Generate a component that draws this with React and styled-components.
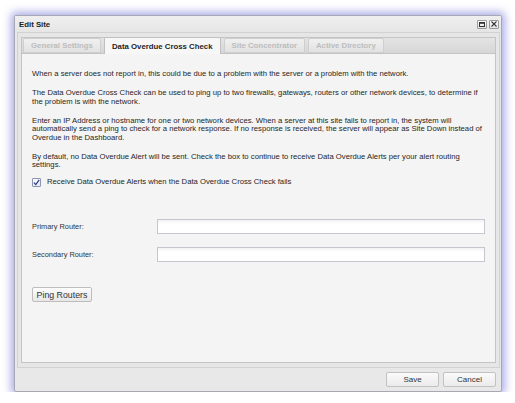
import React from "react";
import styled, { createGlobalStyle } from "styled-components";

const GlobalStyle = createGlobalStyle`
  html, body {
    margin: 0;
    padding: 0;
    background: #ffffff;
  }
  body {
    font-family: "Liberation Sans", Arial, sans-serif;
    color: #2b2b2b;
  }
`;

const Page = styled.div`
  padding: 15px 0 0 14px;
`;

const Dialog = styled.div`
  width: 486px;
  height: 375px;
  display: flex;
  flex-direction: column;
  background: #e8e8e8;
  border: 1px solid #a8a8b4;
  border-radius: 2px;
  box-shadow: 0 0 8px 3px rgba(104, 104, 212, 0.55);
`;

const TitleBar = styled.div`
  height: 16px;
  display: flex;
  align-items: center;
  justify-content: space-between;
  padding: 0 2px 0 4px;
  background: linear-gradient(#efefef, #e6e6e6);
`;

const Title = styled.span`
  font-size: 7.8px;
  font-weight: bold;
  color: #1e1e1e;
`;

const WinButtons = styled.div`
  display: flex;
  gap: 2px;
`;

const WinButton = styled.span`
  width: 8px;
  height: 7px;
  border: 1px solid #9a9a9a;
  border-radius: 1px;
  background: linear-gradient(#ffffff, #e2e2e2);
  display: flex;
  align-items: center;
  justify-content: center;
`;

const Body = styled.div`
  flex: 1;
  display: flex;
  flex-direction: column;
  padding: 0 1px 0 2px;
`;

const Frame = styled.div`
  flex: 1;
  display: flex;
  border: 1px solid #d2d2d2;
  padding: 4px 3px 4px 3px;
  background: #e6e6e6;
`;

const Panel = styled.div`
  flex: 1;
  display: flex;
  flex-direction: column;
  border: 1px solid #c4c4c4;
  background: #f4f4f4;
`;

const TabStrip = styled.div`
  height: 15px;
  display: flex;
  align-items: flex-end;
  gap: 3px;
  padding-left: 1px;
  background: linear-gradient(#e4e4e4, #d6d6d6);
  border-bottom: 1px solid #c4c4c4;
`;

const Tab = styled.div`
  height: ${(p) => (p.$active ? "16px" : "13px")};
  margin-bottom: ${(p) => (p.$active ? "-1px" : "0")};
  padding: 0 7px;
  display: flex;
  align-items: center;
  font-size: 7.8px;
  font-weight: bold;
  white-space: nowrap;
  color: ${(p) => (p.$active ? "#1f1f1f" : "#bdbdbd")};
  background: ${(p) =>
    p.$active ? "#f7f7f7" : "linear-gradient(#f0f0f0, #e2e2e2)"};
  border: 1px solid ${(p) => (p.$active ? "#c0c0c0" : "#cfcfcf")};
  border-bottom: ${(p) => (p.$active ? "none" : "1px solid #cfcfcf")};
  border-radius: 2px 2px 0 0;
`;

const Content = styled.div`
  padding: 16px 10px 0 10px;
  font-size: 7.7px;
  line-height: 8.5px;
  color: #262626;
`;

const Para = styled.p`
  margin: 0 0 10.5px 0;
  white-space: nowrap;
`;

const CheckRow = styled.label`
  display: flex;
  align-items: center;
  gap: 6px;
  height: 9px;
  margin-top: -2px;
`;

const Box = styled.span`
  width: 7px;
  height: 7px;
  border: 1px solid #8d95b5;
  border-radius: 1px;
  background: linear-gradient(#fbfbfd, #e6e8f0);
  display: flex;
  align-items: center;
  justify-content: center;
`;

const Form = styled.div`
  margin-top: 32px;
  display: flex;
  flex-direction: column;
  gap: 13px;
`;

const Row = styled.div`
  display: flex;
  align-items: center;
`;

const Label = styled.span`
  width: 125px;
  font-size: 7.4px;
  color: #333;
  padding-top: 2px;
`;

const Input = styled.div`
  width: 326px;
  height: 13px;
  border: 1px solid #c6c6d0;
  background: linear-gradient(#f2f2f2, #ffffff 4px, #ffffff);
`;

const PingButton = styled.button`
  margin-top: 25px;
  align-self: flex-start;
  width: 60px;
  height: 15px;
  padding: 0;
  font-family: "Liberation Sans", Arial, sans-serif;
  font-size: 8.8px;
  color: #333;
  border: 1px solid #bdbdbd;
  border-radius: 2px;
  background: linear-gradient(#fdfdfd, #e7e7e7);
`;

const Footer = styled.div`
  height: 23px;
  display: flex;
  align-items: center;
  justify-content: flex-end;
  gap: 4px;
  padding-right: 5px;
`;

const FooterButton = styled.button`
  width: 53px;
  height: 15px;
  padding: 0;
  font-family: "Liberation Sans", Arial, sans-serif;
  font-size: 8px;
  color: #333;
  border: 1px solid #c2c2c2;
  border-radius: 2px;
  background: linear-gradient(#fafafa, #ebebeb);
`;

const tabs = [
  { label: "General Settings" },
  { label: "Data Overdue Cross Check", active: true },
  { label: "Site Concentrator" },
  { label: "Active Directory" },
];

export default function App() {
  return (
    <>
      <GlobalStyle />
      <Page>
        <Dialog>
          <TitleBar>
            <Title>Edit Site</Title>
            <WinButtons>
              <WinButton>
                <svg width="6" height="5" viewBox="0 0 6 5">
                  <rect x="0.5" y="0.5" width="5" height="4" fill="none" stroke="#333" />
                  <line x1="0" y1="1.2" x2="6" y2="1.2" stroke="#333" strokeWidth="1.2" />
                </svg>
              </WinButton>
              <WinButton>
                <svg width="6" height="6" viewBox="0 0 6 6">
                  <path d="M0.5 0.5 L5.5 5.5 M5.5 0.5 L0.5 5.5" stroke="#333" strokeWidth="1.1" />
                </svg>
              </WinButton>
            </WinButtons>
          </TitleBar>
          <Body>
            <Frame>
              <Panel>
                <TabStrip>
                  {tabs.map((t) => (
                    <Tab key={t.label} $active={t.active}>
                      {t.label}
                    </Tab>
                  ))}
                </TabStrip>
                <Content>
                  <Para>
                    When a server does not report in, this could be due to a problem with the server or a problem with the network.
                  </Para>
                  <Para>
                    The Data Overdue Cross Check can be used to ping up to two firewalls, gateways, routers or other network devices, to determine if
                    <br />
                    the problem is with the network.
                  </Para>
                  <Para>
                    Enter an IP Address or hostname for one or two network devices. When a server at this site fails to report in, the system will
                    <br />
                    automatically send a ping to check for a network response. If no response is received, the server will appear as Site Down instead of
                    <br />
                    Overdue in the Dashboard.
                  </Para>
                  <Para>
                    By default, no Data Overdue Alert will be sent. Check the box to continue to receive Data Overdue Alerts per your alert routing
                    <br />
                    settings.
                  </Para>
                  <CheckRow>
                    <Box>
                      <svg width="7" height="7" viewBox="0 0 7 7">
                        <path d="M1 3.6 L2.8 5.6 L6.2 0.8" fill="none" stroke="#2d3a78" strokeWidth="1.2" />
                      </svg>
                    </Box>
                    Receive Data Overdue Alerts when the Data Overdue Cross Check fails
                  </CheckRow>
                  <Form>
                    <Row>
                      <Label>Primary Router:</Label>
                      <Input />
                    </Row>
                    <Row>
                      <Label>Secondary Router:</Label>
                      <Input />
                    </Row>
                  </Form>
                  <PingButton>Ping Routers</PingButton>
                </Content>
              </Panel>
            </Frame>
          </Body>
          <Footer>
            <FooterButton>Save</FooterButton>
            <FooterButton>Cancel</FooterButton>
          </Footer>
        </Dialog>
      </Page>
    </>
  );
}
